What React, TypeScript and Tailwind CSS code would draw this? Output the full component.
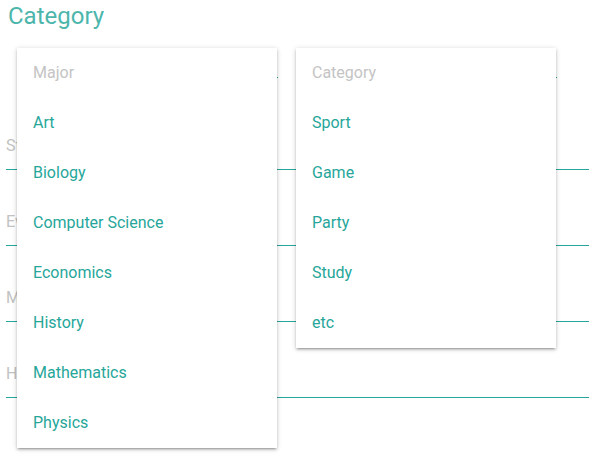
import React from 'react';

const majors = ['Art', 'Biology', 'Computer Science', 'Economics', 'History', 'Mathematics', 'Physics'];
const categories = ['Sport', 'Game', 'Party', 'Study', 'etc'];

const Dropdown: React.FC<{ title: string; items: string[]; className: string }> = ({ title, items, className }) => (
  <ul
    className={`absolute top-[48px] w-[260px] bg-white shadow-[0_2px_2px_0_rgba(0,0,0,0.14),0_3px_1px_-2px_rgba(0,0,0,0.12),0_1px_5px_0_rgba(0,0,0,0.2)] ${className}`}
  >
    <li className="h-[50px] px-4 flex items-center text-[16px] text-[#c4c4c4]">{title}</li>
    {items.map((item) => (
      <li key={item} className="h-[50px] px-4 flex items-center text-[16px] text-[#26a69a]">
        {item}
      </li>
    ))}
  </ul>
);

const Field: React.FC<{ label: string }> = ({ label }) => (
  <div className="h-[76px] flex flex-col justify-end">
    <div className="text-[16px] text-[#c2c2c2] pb-[12px] leading-[22px]">{label}</div>
    <div className="h-px bg-[#26a69a]" />
  </div>
);

export default function App() {
  return (
    <div className="relative w-[589px] h-[457px] bg-white overflow-hidden font-['Roboto',sans-serif]">
      <div className="pl-[6px]">
        <h1 className="pl-[2px] text-[24px] leading-[32px] text-[#4db6ac]">Category</h1>
        <div className="flex gap-[18px] pl-[11px] pr-[32px] h-[46px] items-end">
          <div className="flex-1 h-px bg-[#26a69a]" />
          <div className="flex-1 h-px bg-[#26a69a]" />
        </div>
        <div className="mt-[16px]">
          <Field label="Start Date" />
          <Field label="Event Time" />
          <Field label="Max People" />
          <Field label="Hashtag" />
        </div>
      </div>
      <Dropdown title="Major" items={majors} className="left-[17px]" />
      <Dropdown title="Category" items={categories} className="left-[296px]" />
    </div>
  );
}
